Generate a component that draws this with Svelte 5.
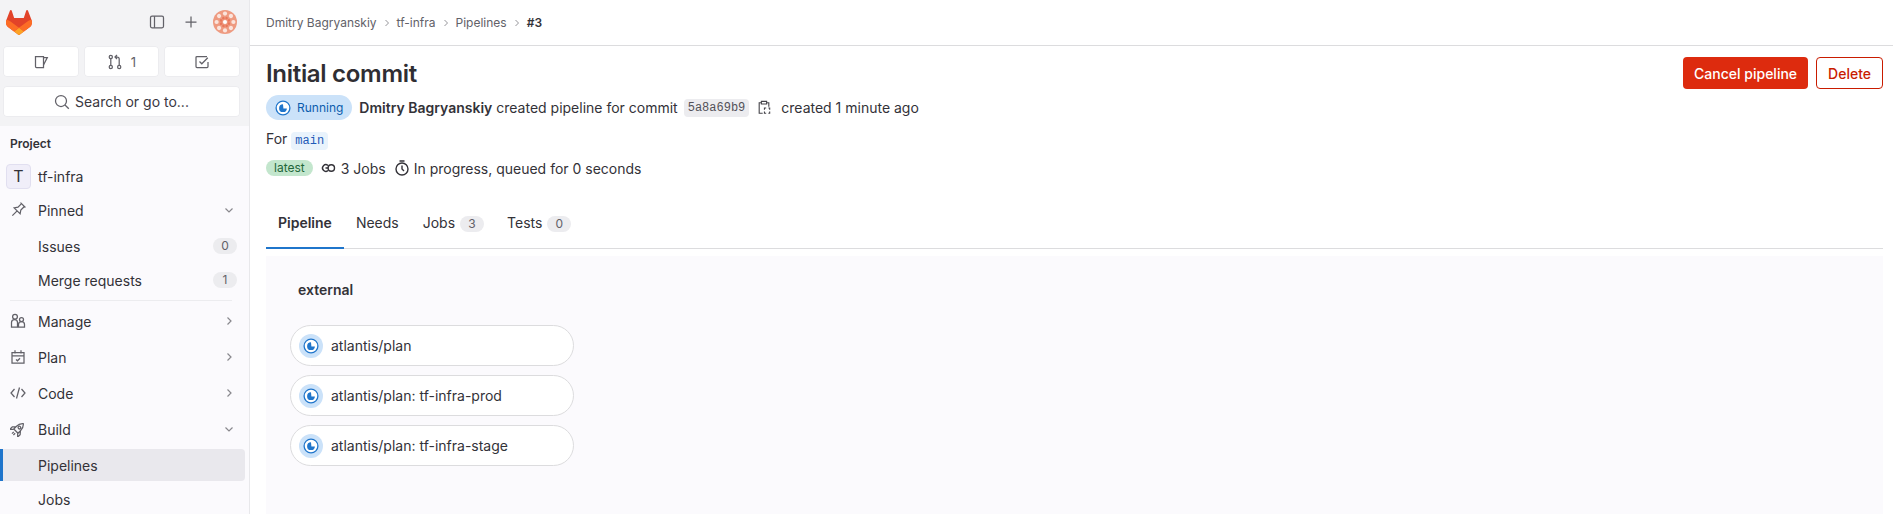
<script>
  // Sidebar and page data
  const pinned = [
    { label: "Issues", count: 0 },
    { label: "Merge requests", count: 1 }
  ];
  const groups = [
    { label: "Manage", icon: "manage" },
    { label: "Plan", icon: "plan" },
    { label: "Code", icon: "code" }
  ];
  const crumbs = ["Dmitry Bagryanskiy", "tf-infra", "Pipelines"];
  const jobs = ["atlantis/plan", "atlantis/plan: tf-infra-prod", "atlantis/plan: tf-infra-stage"];
  const dots = [0, 45, 90, 135, 180, 225, 270, 315];
</script>

{#snippet running()}
  <svg class="status" viewBox="0 0 16 16">
    <circle cx="8" cy="8" r="6.9" fill="#fff" stroke="#1f75cb" stroke-width="1.3" />
    <path d="M8 4.300A3.900 3.900 0 1 0 11.900 8.400H8.400Z" fill="#1f75cb" />
  </svg>
{/snippet}

{#snippet chevron(open)}
  <svg class="chev" viewBox="0 0 16 16">
    <path d={open ? "M4.500 6.500 8 10l3.500-3.500" : "M6.500 4.500 10 8l-3.500 3.500"} />
  </svg>
{/snippet}

<div class="page">
  <aside class="sidebar">
    <div class="top">
      <div class="brand">
        <svg class="logo" viewBox="0 0 25 24">
          <path d="m24.507 9.5-.034-.09L21.082.562a.896.896 0 0 0-1.694.091l-2.29 7.01H7.825L5.535.653a.898.898 0 0 0-1.694-.09L.451 9.411.416 9.5a6.297 6.297 0 0 0 2.09 7.278l.012.01.03.022 5.16 3.867 2.56 1.935 1.554 1.176a1.051 1.051 0 0 0 1.268 0l1.555-1.176 2.56-1.935 5.197-3.89.014-.01A6.297 6.297 0 0 0 24.507 9.5Z" fill="#E24329" />
          <path d="m24.507 9.5-.034-.09a11.44 11.44 0 0 0-4.56 2.051l-7.447 5.632 4.742 3.584 5.197-3.89.014-.01A6.297 6.297 0 0 0 24.507 9.5Z" fill="#FC6D26" />
          <path d="m7.707 20.677 2.56 1.935 1.555 1.176a1.051 1.051 0 0 0 1.268 0l1.555-1.176 2.56-1.935-4.743-3.584-4.755 3.584Z" fill="#FCA326" />
          <path d="M5.01 11.461a11.43 11.43 0 0 0-4.56-2.05L.416 9.5a6.297 6.297 0 0 0 2.09 7.278l.012.01.03.022 5.16 3.867 4.745-3.584-7.444-5.632Z" fill="#FC6D26" />
        </svg>
        <div class="brand-actions">
          <svg class="icon" viewBox="0 0 16 16">
            <rect x="1.500" y="2.200" width="13" height="11.600" rx="1.500" />
            <path d="M5.500 2.200v11.600" />
          </svg>
          <svg class="icon plus" viewBox="0 0 16 16"><path d="M8 2.500v11M2.500 8h11" /></svg>
          <svg class="identicon" viewBox="0 0 24 24">
            <circle cx="12" cy="12" r="12" fill="#ee9a80" />
            {#each dots as a}
              <circle cx="12" cy="3.600" r="2.100" fill="#fbe4dc" transform="rotate({a} 12 12)" />
              <circle cx="12" cy="7.800" r="1.300" fill="#e9775a" transform="rotate({a + 22} 12 12)" />
            {/each}
            <circle cx="12" cy="12" r="2" fill="#fff" />
          </svg>
        </div>
      </div>
      <div class="counters">
        <div class="counter">
          <svg class="icon" viewBox="0 0 16 16">
            <path d="M2.500 2.500h8v11h-7a1 1 0 0 1-1-1Z" />
            <path d="M10.500 3.500h3.800L10.500 11" />
          </svg>
        </div>
        <div class="counter">
          <svg class="icon" viewBox="0 0 16 16">
            <circle cx="3.800" cy="3" r="1.600" />
            <circle cx="3.800" cy="13" r="1.600" />
            <circle cx="12.200" cy="13" r="1.600" />
            <path d="M3.800 4.600v6.800M12.200 11.400V5a2 2 0 0 0-2-2H8.500M10 1 8 3l2 2" />
          </svg>
          <span>1</span>
        </div>
        <div class="counter">
          <svg class="icon" viewBox="0 0 16 16">
            <path d="M14 8v4.500a1 1 0 0 1-1 1H3a1 1 0 0 1-1-1v-9a1 1 0 0 1 1-1h10" />
            <path d="m5.500 7.500 2.300 2.300 6-6" />
          </svg>
        </div>
      </div>
      <div class="search">
        <svg class="icon" viewBox="0 0 16 16">
          <circle cx="7" cy="7" r="5.500" />
          <path d="m11 11 3.800 3.800" />
        </svg>
        Search or go to...
      </div>
    </div>

    <nav class="nav">
      <div class="nav-title">Project</div>
      <div class="project">
        <span class="avatar">T</span>
        tf-infra
      </div>
      <div class="item pinned">
        <svg class="icon" viewBox="0 0 16 16">
          <g transform="rotate(45 8 8)">
            <path d="M4.500 1h7M6 1v5L3.800 9.200h8.400L10 6V1M8 9.200V16" />
          </g>
        </svg>
        <span class="grow">Pinned</span>
        {@render chevron(true)}
      </div>
      {#each pinned as link}
        <div class="item sub">
          <span class="grow">{link.label}</span>
          <span class="count">{link.count}</span>
        </div>
      {/each}
      <hr />
      {#each groups as g}
        <div class="item">
          <svg class="icon" viewBox="0 0 16 16">
            {#if g.icon === "manage"}
              <circle cx="5" cy="3.700" r="2.400" />
              <path d="M1.500 14V9.500a3 3 0 0 1 6 0V14Z" />
              <circle cx="11.500" cy="6.500" r="2" />
              <path d="M8.500 14v-2.500a3 3 0 0 1 6 0V14Z" />
            {:else if g.icon === "plan"}
              <path d="M2 3.500h12v10.500H2ZM2 6.800h12M5 1.200v3.400M11 1.200v3.400M6 10.500l1.500 1.300 2.500-2.500" />
            {:else}
              <path d="M4.500 4 1 8l3.500 4M11.500 4 15 8l-3.500 4M9.500 2.500l-3 11" />
            {/if}
          </svg>
          <span class="grow">{g.label}</span>
          {@render chevron(false)}
        </div>
      {/each}
      <div class="item">
        <svg class="icon" viewBox="0 0 16 16">
          <g transform="rotate(45 8 8)">
            <path d="M8 .5c2.500 2 3 5 3 7v3.500H5V7.500c0-2 .5-5 3-7ZM5 7.500l-2.500 3v3.500L5 11.500M11 7.500l2.500 3v3.500L11 11.500M7 13v2.500M9 13v2.500" />
            <circle cx="8" cy="6" r="1.300" />
          </g>
        </svg>
        <span class="grow">Build</span>
        {@render chevron(true)}
      </div>
      <div class="item sub active">Pipelines</div>
      <div class="item sub">Jobs</div>
    </nav>
  </aside>

  <main class="main">
    <header class="crumbs">
      {#each crumbs as c}
        <span>{c}</span>
        <svg class="sep" viewBox="0 0 16 16"><path d="M6 4l4 4-4 4" /></svg>
      {/each}
      <strong>#3</strong>
    </header>

    <div class="content">
      <div class="heading">
        <h1>Initial commit</h1>
        <div class="actions">
          <button class="cancel">Cancel pipeline</button>
          <button class="delete">Delete</button>
        </div>
      </div>

      <div class="meta">
        <span class="badge-running">{@render running()} Running</span>
        <span class="creator"><b>Dmitry Bagryanskiy</b> created pipeline for commit</span>
        <code class="sha">5a8a69b9</code>
        <svg class="icon clip" viewBox="0 0 16 16">
          <path d="M5 2.500H2.500v12h4M11 2.500h2.500V7M5 1h6v3H5ZM8.500 10.500v-2h2M13 8.500h1.500v2M14.500 12.500v2H13M10.500 14.500h-2v-2" />
        </svg>
        <span class="ago">created 1 minute ago</span>
      </div>

      <div class="ref">For <code>main</code></div>

      <div class="stats">
        <span class="latest">latest</span>
        <svg class="icon" viewBox="0 0 16 16">
          <path d="M8 5.500A3.300 3.300 0 1 0 8 10.500M5.500 8h3" />
          <circle cx="11.300" cy="8" r="3.200" />
        </svg>
        <span class="jobs-count">3 Jobs</span>
        <svg class="icon timer" viewBox="0 0 16 16">
          <circle cx="8" cy="9" r="6" />
          <path d="M5.500 1h5M8 5.500V9l2 2" />
        </svg>
        <span>In progress, queued for 0 seconds</span>
      </div>

      <div class="tabs">
        <div class="tab current">Pipeline</div>
        <div class="tab">Needs</div>
        <div class="tab">Jobs <span class="count">3</span></div>
        <div class="tab tests">Tests <span class="count">0</span></div>
      </div>

      <section class="graph">
        <div class="stage">external</div>
        <div class="job-list">
          {#each jobs as job}
            <div class="job">
              <span class="halo">{@render running()}</span>
              {job}
            </div>
          {/each}
        </div>
      </section>
    </div>
  </main>
</div>

<style>
  :global(body) {
    margin: 0;
    background: #fff;
  }
  .page {
    display: flex;
    height: 514px;
    overflow: hidden;
    font-family: Inter, "Noto Sans", sans-serif;
    font-size: 14px;
    color: #333238;
  }
  .icon {
    width: 16px;
    height: 16px;
    flex: none;
    fill: none;
    stroke: #626168;
    stroke-width: 1.25;
  }

  /* sidebar */
  .sidebar {
    width: 249px;
    flex: none;
    background: #fbfafd;
    border-right: 1px solid #e8e8eb;
  }
  .top {
    height: 126px;
    box-sizing: border-box;
    background: #f3f3f5;
    padding: 0 9px 0 3px;
  }
  .brand {
    height: 46px;
    display: flex;
    align-items: center;
    justify-content: space-between;
    padding: 0 3px 2px 3px;
    box-sizing: border-box;
  }
  .logo {
    width: 26px;
    height: 25px;
  }
  .brand-actions {
    display: flex;
    align-items: center;
    gap: 18px;
  }
  .identicon {
    width: 24px;
    height: 24px;
    margin-left: -4px;
  }
  .counters {
    display: grid;
    grid-template-columns: repeat(3, 1fr);
    gap: 5px;
  }
  .counter,
  .search {
    height: 31px;
    display: flex;
    align-items: center;
    justify-content: center;
    gap: 8px;
    background: #fff;
    border-radius: 4px;
    box-shadow: 0 0 0 1px #ececef inset;
    color: #626168;
    font-size: 13px;
  }
  .search {
    margin-top: 9px;
    gap: 5px;
    font-size: 14px;
    color: #3a383f;
  }
  .nav {
    padding-top: 6px;
  }
  .nav-title {
    height: 24px;
    line-height: 24px;
    padding-left: 10px;
    font-size: 12px;
    font-weight: 600;
  }
  .project {
    display: flex;
    align-items: center;
    gap: 7px;
    height: 34px;
    padding-left: 6px;
    margin-top: 3px;
  }
  .avatar {
    width: 23px;
    height: 23px;
    display: flex;
    align-items: center;
    justify-content: center;
    background: #f0eef9;
    border: 1px solid #e1dff0;
    border-radius: 4px;
    font-size: 16px;
  }
  .item {
    display: flex;
    align-items: center;
    gap: 12px;
    height: 36px;
    padding: 0 11px 0 10px;
    box-sizing: border-box;
  }
  .item.pinned {
    height: 34px;
    margin-bottom: 2px;
  }
  .item.sub {
    height: 34px;
    padding-left: 38px;
    padding-right: 12px;
  }
  .grow {
    flex: 1;
  }
  .chev {
    width: 16px;
    height: 16px;
    fill: none;
    stroke: #89888d;
    stroke-width: 1.2;
    margin-right: 1px;
  }
  .count {
    display: inline-block;
    min-width: 8px;
    padding: 0 8px;
    height: 16px;
    line-height: 16px;
    border-radius: 8px;
    background: #ececef;
    color: #626168;
    font-size: 12px;
    text-align: center;
  }
  hr {
    border: 0;
    border-top: 1px solid #ececef;
    margin: 3px 17px 2px 10px;
  }
  .item.active {
    height: 32px;
    width: 245px;
    margin-top: 2px;
    background: #e9e8ed;
    border-radius: 0 4px 4px 0;
    border-left: 3px solid #1f75cb;
    padding-left: 35px;
    margin-bottom: 1px;
  }

  /* main */
  .main {
    flex: 1;
    min-width: 0;
  }
  .crumbs {
    height: 45px;
    display: flex;
    align-items: center;
    padding: 0 16px;
    border-bottom: 1px solid #dcdcde;
    font-size: 12px;
    color: #626168;
    gap: 4px;
  }
  .crumbs strong {
    color: #333238;
    font-weight: 600;
  }
  .sep {
    width: 12px;
    height: 12px;
    fill: none;
    stroke: #89888d;
    stroke-width: 1.2;
  }
  .content {
    padding: 0 10px 0 16px;
  }
  .heading {
    height: 49px;
    box-sizing: border-box;
    padding-top: 5px;
    display: flex;
    align-items: center;
    justify-content: space-between;
  }
  h1 {
    margin: 0;
    font-size: 24px;
    font-weight: 600;
    color: #2f2e33;
    letter-spacing: -0.3px;
  }
  .actions {
    display: flex;
    gap: 8px;
  }
  button {
    height: 32px;
    border-radius: 4px;
    font: 500 14px Inter, sans-serif;
    padding: 0 11px;
  }
  .cancel {
    background: #dd2b0e;
    color: #fff;
    border: 0;
  }
  .delete {
    background: #fff;
    color: #c91c00;
    border: 1px solid #c91c00;
  }
  .meta {
    display: flex;
    align-items: center;
    gap: 8px;
    height: 25px;
  }
  .creator b {
    font-weight: 600;
  }
  .badge-running {
    display: inline-flex;
    align-items: center;
    gap: 6px;
    height: 25px;
    padding: 0 9px;
    border-radius: 13px;
    background: #cbe2f9;
    color: #0b5cad;
    font-size: 12px;
    margin-right: -1px;
  }
  .status {
    width: 16px;
    height: 16px;
    flex: none;
  }
  .sha {
    font-family: "Liberation Mono", monospace;
    font-size: 12px;
    background: #ececef;
    color: #535158;
    padding: 2px 4px;
    border-radius: 4px;
    margin-left: -2px;
  }
  .clip {
    width: 14px;
    height: 15px;
    stroke: #444349;
  }
  .ago {
    margin-left: 2px;
  }
  .ref {
    margin-top: 9px;
    height: 20px;
    line-height: 20px;
  }
  .ref code {
    font-family: "Liberation Mono", monospace;
    font-size: 12px;
    background: #e9f3fc;
    color: #1f5bb8;
    padding: 2px 4px;
    border-radius: 4px;
  }
  .stats {
    margin-top: 9px;
    display: flex;
    align-items: center;
    height: 20px;
  }
  .latest {
    height: 16px;
    line-height: 16px;
    padding: 0 8px;
    border-radius: 8px;
    background: #c3e6cd;
    color: #24663b;
    font-size: 12px;
    margin-right: 7px;
  }
  .jobs-count {
    margin: 0 8px 0 5px;
  }
  .timer {
    margin-right: 4px;
  }
  .stats .icon {
    stroke: #333238;
    stroke-width: 1.4;
  }
  .tabs {
    margin-top: 24px;
    display: flex;
    height: 47px;
    box-sizing: border-box;
    box-shadow: inset 0 -1px 0 #dcdcde;
  }
  .tab {
    padding: 0 12px;
    line-height: 41px;
    height: 47px;
    box-sizing: border-box;
  }
  .tab.tests {
    margin-left: -1px;
  }
  .tab .count {
    margin-left: 1px;
  }
  .tab.current {
    font-weight: 600;
    border-bottom: 2px solid #1f75cb;
  }
  .graph {
    margin-top: 7px;
    height: 262px;
    background: #fbfafd;
    padding: 24px 24px 0;
    box-sizing: border-box;
  }
  .stage {
    font-weight: 600;
    padding-left: 8px;
    height: 20px;
    line-height: 20px;
  }
  .job-list {
    margin-top: 25px;
    display: flex;
    flex-direction: column;
    gap: 9px;
  }
  .job {
    width: 284px;
    height: 41px;
    box-sizing: border-box;
    display: flex;
    align-items: center;
    gap: 8px;
    padding-left: 8px;
    background: #fff;
    border: 1px solid #dcdcde;
    border-radius: 21px;
  }
  .halo {
    width: 24px;
    height: 24px;
    border-radius: 50%;
    background: #cbe2f9;
    display: flex;
    align-items: center;
    justify-content: center;
  }
</style>
